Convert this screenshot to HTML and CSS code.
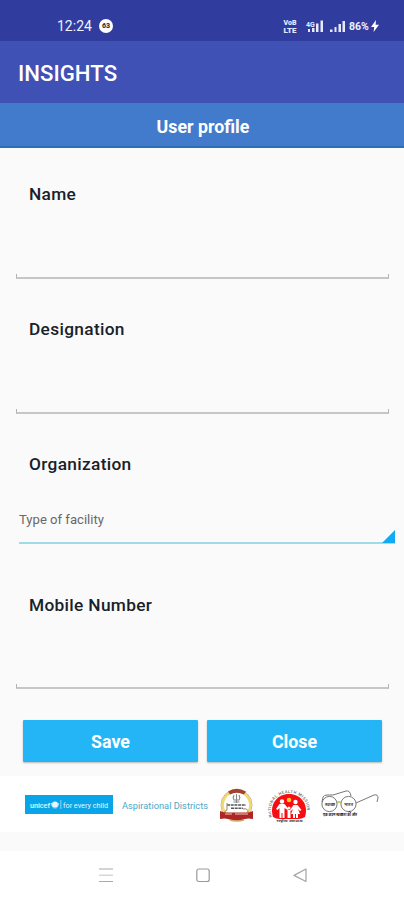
FILE: index.html
```
<!DOCTYPE html>
<html lang="en">
<head>
<meta charset="utf-8">
<title>INSIGHTS</title>
<link rel="stylesheet" href="styles.css">
</head>
<body>
<div class="status">
  <span class="time">12:24</span>
  <span class="badge">63</span>
  <svg class="signals" width="69" height="16" viewBox="0 0 69 16" fill="#e6e9ff">
    <g font-family="Roboto" font-weight="900" font-size="6.500">
      <text x="0.500" y="7" textLength="13" lengthAdjust="spacingAndGlyphs">VoB</text>
      <text x="0.500" y="14.500" textLength="13" lengthAdjust="spacingAndGlyphs">LTE</text>
    </g>
    <text x="23" y="9" font-family="Roboto" font-weight="700" font-size="7">4G</text>
    <path d="M25 11h2v3h-2zM29 10h2.500v4h-2.500zM33 5.500h2.500v8.500h-2.500zM37.500 2.500h2.500v11.500h-2.500z"/>
    <path d="M47 11.500h2.500v2.500h-2.500zM51.500 9h2v5h-2zM55.500 6h2.500v8h-2.500zM59.500 3h2.500v11h-2.500z"/>
  </svg>
  <span class="battery">86%</span>
  <svg class="bolt" width="8" height="12" viewBox="0 0 8 12"><path d="M5 0 0 7h3.200L2.600 12 8 4.800H4.600z" fill="#fff"/></svg>
</div>
<header class="appbar">INSIGHTS</header>
<h1 class="band">User profile</h1>
<main class="form">
  <div class="field"><label class="label">Name</label><div class="line"></div></div>
  <div class="field"><label class="label">Designation</label><div class="line"></div></div>
  <div class="field organization">
    <label class="label">Organization</label>
    <div class="select"><span>Type of facility</span><svg class="corner" width="13" height="13" viewBox="0 0 13 13"><path d="M13 0v13H0z" fill="#0fabf5"/></svg></div>
  </div>
  <div class="field mobile"><label class="label">Mobile Number</label><div class="line"></div></div>
  <div class="actions"><button>Save</button><button>Close</button></div>
</main>
<footer class="partners">
  <svg class="unicef" width="88" height="19" viewBox="0 0 88 19">
    <rect width="88" height="19" fill="#09a5e9"/>
    <g fill="#e4f6ff" font-family="Roboto" font-size="8">
      <text x="5" y="12.500" font-weight="500" textLength="20" lengthAdjust="spacingAndGlyphs">unicef</text>
      <circle cx="30" cy="9.500" r="3"/><path d="M26.500 8q0 5 3.500 5t3.500-5" fill="none" stroke="#c8edff" stroke-width=".8"/>
      <path d="M35.600 5h.6v9h-.6z"/>
      <text x="38" y="12.500" textLength="45" lengthAdjust="spacingAndGlyphs">for every child</text>
    </g>
  </svg>
  <span class="aspire">Aspirational Districts</span>
  <svg class="emblem" width="36" height="34" viewBox="0 0 36 34">
    <circle cx="17.500" cy="17" r="15.500" fill="#fff" stroke="#d9a0a0"/>
    <circle cx="17.500" cy="17" r="13.800" fill="#fff" stroke="#eedb70" stroke-width="2.500"/>
    <path d="M9 3.500Q17.500-2 27 3.500L25 6.500Q17.500 3 11 6.500z" fill="#a44232"/>
    <path d="M17.500 6v9M15 7q-1.500 3 0 5h5q1.500-2 0-5M14.500 14h6" fill="none" stroke="#888" stroke-width="1.100"/>
    <path d="M8 17h19M12 20.300h12" stroke="#555" stroke-width="1.600" stroke-dasharray="3 .7"/>
    <path d="M8 15v7q-3 1-2 3M24 21q5-1 5 3" fill="none" stroke="#a27c74"/>
    <path d="M1 23q5 2 8 1.500h18q4 0 7-1.500v8q-5-1-8 0-8 3-17 0-3-1-8 0z" fill="#ae2525"/>
    <path d="M6 26h7M16 26h13" stroke="#efcaae"/><path d="M11 32q7 2 14 0" fill="none" stroke="#d0a46b" stroke-width="1.500"/>
  </svg>
  <svg class="mission" width="46" height="36" viewBox="-2 -2 46 36">
    <path id="arc" d="M4.500 29C-1 14 9 4 21 4s22 10 16.500 25" fill="none"/>
    <text font-family="Roboto" font-size="4" font-weight="500" fill="#666"><textPath href="#arc" startOffset="1" textLength="63">NATIONAL HEALTH MISSION</textPath></text>
    <path d="M5 28C1 15 9.500 5 21 5s20 10 16 23q-3 2-7 2H12q-4 0-7-2" fill="#f50d12"/>
    <circle cx="21" cy="11" r="2.300" fill="#ffc52c"/>
    <g fill="#fff"><circle cx="14" cy="12.500" r="2.200"/><path d="M11.500 15h5l4 5-1 1-3-2v10h-2v-5h-1v5h-2V19l-2 2-1.500-1z"/><circle cx="27.500" cy="13" r="2.200"/><path d="M25.500 16h4l4 5-1.500 1-2-2 2 5h-2v4h-2v-4h-1v4h-2v-4h-2l2-5-2 2-1-1z"/><circle cx="21" cy="19" r="1.500"/><path d="M19.500 21h3v8h-3z"/></g>
    <text x="8.500" y="32.800" font-family="Noto Sans" font-size="3.500" font-weight="700" fill="#444" textLength="26" lengthAdjust="spacingAndGlyphs">राष्ट्रीय स्वास्थ्य</text>
  </svg>
  <svg class="glasses" width="58" height="29" viewBox="0 0 58 29">
    <g fill="none" stroke="#777" stroke-width="1"><circle cx="8.500" cy="14" r="7.600"/><circle cx="27.500" cy="14" r="7.600"/><path d="M1 12 2 7q1-2 4-2h6L25 1q4-1 5 5M35 13 53 5q4-1 4 3l-1 4"/></g>
    <path d="M16 13q2-2.500 4 0" fill="none" stroke="#abc448" stroke-width="1.400"/>
    <g font-family="Noto Sans" fill="#444" font-size="4.500" font-weight="700"><text x="4" y="15.500" textLength="10" lengthAdjust="spacingAndGlyphs">स्वच्छ</text><text x="23" y="15.500" textLength="9" lengthAdjust="spacingAndGlyphs">भारत</text><text x="2" y="26" fill="#111" textLength="34" lengthAdjust="spacingAndGlyphs">एक कदम स्वच्छता की ओर</text></g>
  </svg>
</footer>
<nav class="nav">
  <svg width="14" height="16" viewBox="0 0 14 16" stroke="#aaa" stroke-width="1.200"><path d="M0 2h14M0 14.500h14"/><path d="M0 8.200h14" stroke="#ccc"/></svg>
  <svg width="14" height="16" viewBox="0 0 14 16" fill="none" stroke="#999" stroke-width="1.200"><rect x=".8" y="2" width="12.400" height="12.500" rx="2"/></svg>
  <svg width="14" height="16" viewBox="0 0 14 16" fill="none" stroke="#a5a5a5" stroke-width="1.200" stroke-linejoin="round"><path d="M13 2v12.500L1 8.400z"/></svg>
</nav>
</body>
</html>
```
FILE: styles.css
```
* { box-sizing: border-box; }
body { margin: 0; width: 404px; height: 900px; overflow: hidden; background: #fafafa; font-family: Roboto, "Liberation Sans", sans-serif; color: #17212b; }
svg { display: block; flex: none; }
.status { height: 41px; background: #303d9f; color: #eef0ff; display: flex; align-items: center; padding: 11px 24px 0 57px; }
.time { font-size: 14px; width: 42px; }
.badge { width: 14px; height: 14px; border-radius: 50%; background: #fff; color: #333; font-size: 7px; font-weight: 900; line-height: 14px; text-align: center; }
.signals { margin-left: 170px; }
.battery { font-size: 10.5px; font-weight: 700; width: 21px; margin-left: -3px; white-space: nowrap; }
.bolt { margin-left: 1px; }
.appbar { height: 62px; background: #4051b5; color: #fff; font-size: 22.2px; font-weight: 500; line-height: 65px; padding-left: 18px; }
.band { margin: 0; height: 45px; background: #427bcb; border-bottom: 2px solid #2b70b5; color: #fff; font-size: 17.8px; font-weight: 700; line-height: 47px; text-align: center; padding-left: 2px; }
.form { height: 628px; padding: 32px 0 0 16px; }
.field { height: 135px; }
.label { display: block; height: 28px; line-height: 28px; padding-left: 13px; font-size: 17.3px; font-weight: 500; letter-spacing: 0.33px; }
.line { width: 373px; height: 5px; margin-top: 66px; border: 1px solid #b3b3b3; border-top: 0; border-bottom-width: 2px; border-bottom-color: #c6c6c6; }
.field.organization { height: 141px; }
.select { width: 376px; height: 32px; margin: 34px 0 0 3px; border-bottom: 2px solid #a0dce8; display: flex; justify-content: space-between; font-size: 13.1px; color: #686868; line-height: 15px; }
.corner { margin-top: 18px; }
.mobile .line { margin-top: 65px; }
.mobile { height: 129px; }
.actions { display: flex; gap: 9px; padding-left: 7px; }
.actions button { width: 175px; height: 42px; padding: 0; border: 0; border-radius: 1px; background: #23b5f6; box-shadow: 0 1px 2px #0004; color: #fff; font: 700 17.8px Roboto, sans-serif; }
.partners { height: 56px; background: #fff; display: flex; align-items: center; padding: 1px 0 0 25px; }
.aspire { width: 87px; margin: 2px 0 0 9px; font-size: 9.3px; color: #4ba9c8; white-space: nowrap; }
.emblem { margin-left: 10px; }
.mission { margin-left: 11px; }
.glasses { margin-left: 9px; }
.nav { height: 49px; margin-top: 19px; background: #fff; display: flex; gap: 83px; padding: 16px 0 0 99px; }
```
